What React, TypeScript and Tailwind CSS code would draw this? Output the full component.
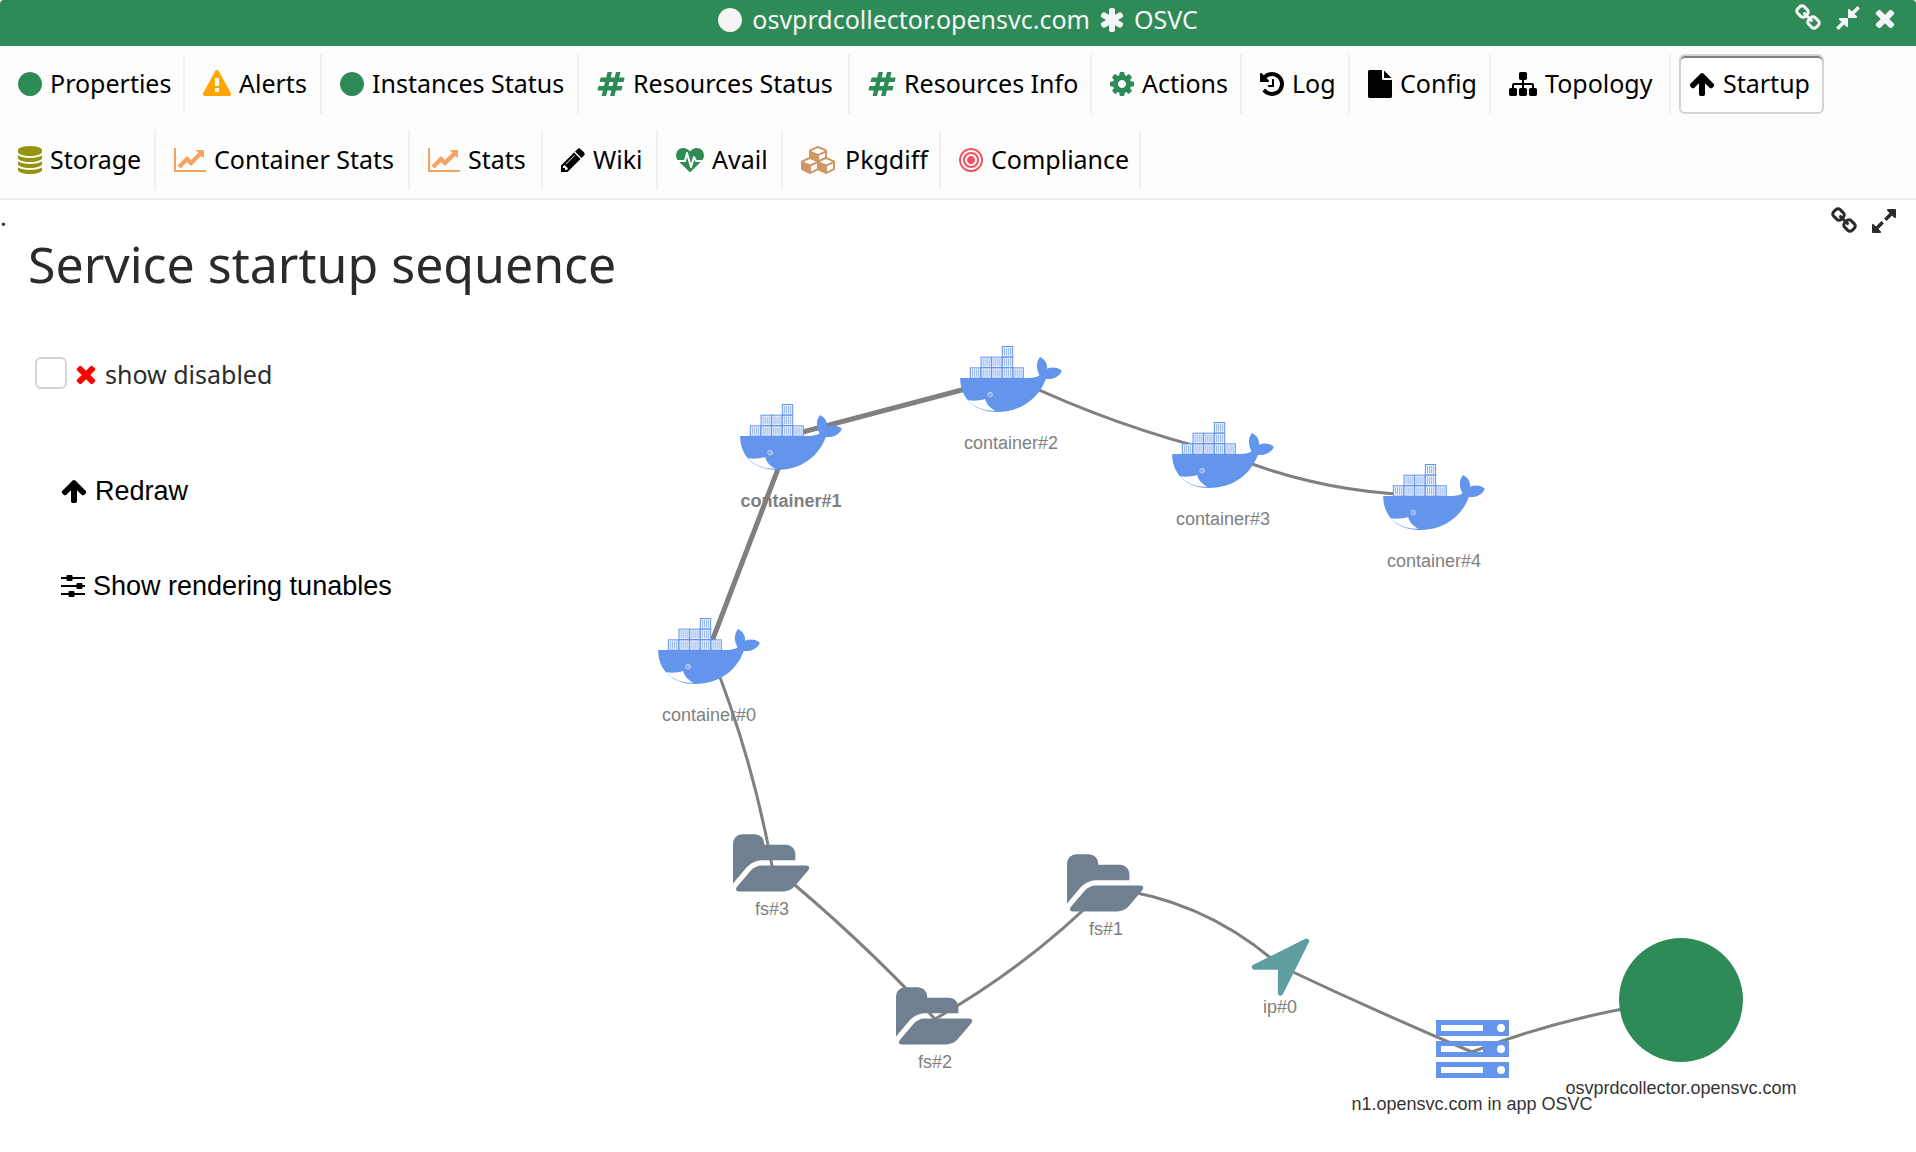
import type { ReactNode } from "react";

type Glyph = { vb: string; d: string };

const glyphs = {
  link: {
    vb: "0 0 1792 1792",
    d: "M1520 1216q0-40-28-68l-208-208q-28-28-68-28-42 0-72 32 3 3 19 18.5t21.5 21.5 15 19 13 25.5 3.5 27.5q0 40-28 68t-68 28q-15 0-27.5-3.5t-25.5-13-19-15-21.5-21.5-18.5-19q-33 31-33 73 0 40 28 68l206 207q27 27 68 27 40 0 68-26l147-146q28-28 28-67zm-703-705q0-40-28-68l-206-207q-28-28-68-28-39 0-68 27l-147 146q-28 28-28 67 0 40 28 68l208 208q27 27 68 27 42 0 72-31-3-3-19-18.5t-21.5-21.5-15-19-13-25.5-3.5-27.5q0-40 28-68t68-28q15 0 27.5 3.5t25.5 13 19 15 21.5 21.5 18.5 19q33-31 33-73zm895 705q0 120-85 203l-147 146q-83 83-203 83-121 0-204-85l-206-207q-83-83-83-203 0-123 88-209l-88-88q-86 88-208 88-120 0-204-84l-208-208q-84-84-84-204t85-203l147-146q83-83 203-83 121 0 204 85l206 207q83 83 83 203 0 123-88 209l88 88q86-88 208-88 120 0 204 84l208 208q84 84 84 204z",
  },
  compress: {
    vb: "0 0 1792 1792",
    d: "M896 960v448q0 26-19 45t-45 19-45-19l-144-144-332 332q-10 10-23 10t-23-10l-114-114q-10-10-10-23t10-23l332-332-144-144q-19-19-19-45t19-45 45-19h448q26 0 45 19t19 45zm755-672q0 13-10 23l-332 332 144 144q19 19 19 45t-19 45-45 19h-448q-26 0-45-19t-19-45v-448q0-26 19-45t45-19 45 19l144 144 332-332q10-10 23-10t23 10l114 114q10 10 10 23z",
  },
  expand: {
    vb: "0 0 1792 1792",
    d: "M883 1056q0 13-10 23l-332 332 144 144q19 19 19 45t-19 45-45 19h-448q-26 0-45-19t-19-45v-448q0-26 19-45t45-19 45 19l144 144 332-332q10-10 23-10t23 10l114 114q10 10 10 23zm781-864v448q0 26-19 45t-45 19-45-19l-144-144-332 332q-10 10-23 10t-23-10l-114-114q-10-10-10-23t10-23l332-332-144-144q-19-19-19-45t19-45 45-19h448q26 0 45 19t19 45z",
  },
  times: {
    vb: "192 0 1408 1792",
    d: "M1490 1322q0 40-28 68l-136 136q-28 28-68 28t-68-28l-294-294-294 294q-28 28-68 28t-68-28l-136-136q-28-28-28-68t28-68l294-294-294-294q-28-28-28-68t28-68l136-136q28-28 68-28t68 28l294 294 294-294q28-28 68-28t68 28l136 136q28 28 28 68t-28 68l-294 294 294 294q28 28 28 68z",
  },
  circle: {
    vb: "128 0 1536 1792",
    d: "M1664 896q0 209-103 385.5t-279.5 279.5-385.5 103-385.5-103-279.5-279.5-103-385.5 103-385.5 279.5-279.5 385.5-103 385.5 103 279.5 279.5 103 385.5z",
  },
  warning: {
    vb: "0 0 1792 1792",
    d: "M1024 1375v-190q0-14-9.5-23.5t-22.5-9.5h-192q-13 0-22.5 9.5t-9.5 23.5v190q0 14 9.5 23.5t22.5 9.5h192q13 0 22.5-9.5t9.5-23.5zm-2-374l18-459q0-12-10-19-13-11-24-11h-220q-11 0-24 11-10 7-10 21l17 457q0 10 10 16.5t24 6.5h185q14 0 23.5-6.5t10.5-16.5zm-14-934l768 1408q35 63-2 126-17 29-46.5 46t-63.5 17h-1536q-34 0-63.5-17t-46.5-46q-37-63-2-126l768-1408q17-31 47-49t65-18 65 18 47 49z",
  },
  hashtag: {
    vb: "0 0 1792 1792",
    d: "M991 1024l64-256h-254l-64 256h254zm768-504l-56 224q-7 24-31 24h-327l-64 256h311q15 0 25 12 10 14 6 28l-56 224q-5 24-31 24h-327l-81 328q-7 24-31 24h-224q-16 0-26-12-9-12-6-28l78-312h-254l-81 328q-7 24-31 24h-225q-15 0-25-12-9-12-6-28l78-312h-311q-15 0-25-12-9-12-6-28l56-224q7-24 31-24h327l64-256h-311q-15 0-25-12-10-14-6-28l56-224q5-24 31-24h327l81-328q7-24 32-24h224q15 0 25 12 9 12 6 28l-78 312h254l81-328q7-24 32-24h224q15 0 25 12 9 12 6 28l-78 312h311q15 0 25 12 9 12 6 28z",
  },
  cog: {
    vb: "128 0 1536 1792",
    d: "M1152 896q0-106-75-181t-181-75-181 75-75 181 75 181 181 75 181-75 75-181zm512-109v222q0 12-8 23t-20 13l-185 28q-19 54-39 91 35 50 107 138 10 12 10 25t-9 23q-27 37-99 108t-94 71q-12 0-26-9l-138-108q-44 23-91 38-16 136-29 186-7 28-36 28h-222q-14 0-24.5-8.5t-11.5-21.5l-28-184q-49-16-90-37l-141 107q-10 9-25 9-14 0-25-11-126-114-165-168-7-10-7-23 0-12 8-23 15-21 51-66.5t54-70.5q-27-50-41-99l-183-27q-13-2-21-12.5t-8-23.5v-222q0-12 8-23t19-13l186-28q14-46 39-92-40-57-107-138-10-12-10-24 0-10 9-23 26-36 98.5-107.5t94.5-71.5q13 0 26 10l138 107q44-23 91-38 16-136 29-186 7-28 36-28h222q14 0 24.5 8.5t11.5 21.5l28 184q49 16 90 37l142-107q9-9 24-9 13 0 25 10 129 119 165 170 7 8 7 22 0 12-8 23-15 21-51 66.5t-54 70.5q26 50 41 98l183 28q13 2 21 12.5t8 23.5z",
  },
  history: {
    vb: "128 0 1536 1792",
    d: "M1664 896q0 156-61 298t-164 245-245 164-298 61q-172 0-327-72.5t-264-204.5q-7-10-6.5-22.5t8.5-20.5l137-138q10-9 25-9 16 2 23 12 73 95 179 147t225 52q104 0 198.5-40.5t163.5-109.5 109.5-163.5 40.5-198.5-40.5-198.5-109.5-163.5-163.5-109.5-198.5-40.5q-98 0-188 35.5t-160 101.5l137 138q31 30 14 69-17 40-59 40h-448q-26 0-45-19t-19-45v-448q0-42 40-59 39-17 69 14l130 129q107-101 244.5-156.5t284.5-55.5q156 0 298 61t245 164 164 245 61 298zm-640-288v448q0 14-9 23t-23 9h-320q-14 0-23-9t-9-23v-64q0-14 9-23t23-9h224v-352q0-14 9-23t23-9h64q14 0 23 9t9 23z",
  },
  file: {
    vb: "128 0 1536 1792",
    d: "M1152 512v-472q22 14 36 28l408 408q14 14 28 36h-472zm-128 32q0 40 28 68t68 28h544v1056q0 40-28 68t-68 28h-1344q-40 0-68-28t-28-68v-1600q0-40 28-68t68-28h800v544z",
  },
  sitemap: {
    vb: "0 0 1792 1792",
    d: "M1792 1248v320q0 40-28 68t-68 28h-320q-40 0-68-28t-28-68v-320q0-40 28-68t68-28h96v-192h-512v192h96q40 0 68 28t28 68v320q0 40-28 68t-68 28h-320q-40 0-68-28t-28-68v-320q0-40 28-68t68-28h96v-192h-512v192h96q40 0 68 28t28 68v320q0 40-28 68t-68 28h-320q-40 0-68-28t-28-68v-320q0-40 28-68t68-28h96v-192q0-52 38-90t90-38h512v-192h-96q-40 0-68-28t-28-68v-320q0-40 28-68t68-28h320q40 0 68 28t28 68v320q0 40-28 68t-68 28h-96v192h512q52 0 90 38t38 90v192h96q40 0 68 28t28 68z",
  },
  arrowUp: {
    vb: "64 0 1664 1792",
    d: "M1675 971q0 51-37 90l-75 75q-38 38-91 38-54 0-90-38l-294-293v704q0 52-37.5 84.5t-90.5 32.5h-128q-53 0-90.5-32.5t-37.5-84.5v-704l-294 293q-36 38-90 38t-90-38l-75-75q-38-38-38-90 0-53 38-91l651-651q35-37 90-37 54 0 91 37l651 651q37 39 37 91z",
  },
  database: {
    vb: "128 0 1536 1792",
    d: "M896 768q237 0 443-43t325-127v170q0 69-103 128t-280 93.5-385 34.5-385-34.5-280-93.5-103-128v-170q119 84 325 127t443 43zm0 768q237 0 443-43t325-127v170q0 69-103 128t-280 93.5-385 34.5-385-34.5-280-93.5-103-128v-170q119 84 325 127t443 43zm0-384q237 0 443-43t325-127v170q0 69-103 128t-280 93.5-385 34.5-385-34.5-280-93.5-103-128v-170q119 84 325 127t443 43zm0-1152q208 0 385 34.5t280 93.5 103 128v128q0 69-103 128t-280 93.5-385 34.5-385-34.5-280-93.5-103-128v-128q0-69 103-128t280-93.5 385-34.5z",
  },
  lineChart: {
    vb: "0 0 2048 1792",
    d: "M2048 1536v128h-2048v-1536h128v1408h1920zm-128-1248v435q0 21-19.5 29.5t-35.5-7.5l-121-121-633 633q-10 10-23 10t-23-10l-233-233-416 416-192-192 585-585q10-10 23-10t23 10l233 233 464-464-121-121q-16-16-7.5-35.5t29.5-19.5h435q14 0 23 9t9 23z",
  },
  pencil: {
    vb: "128 0 1536 1792",
    d: "M491 1536l91-91-235-235-91 91v107h128v128h107zm523-928q0-22-22-22-10 0-17 7l-542 542q-7 7-7 17 0 22 22 22 10 0 17-7l542-542q7-7 7-17zm-54-192l416 416-832 832h-416v-416zm683 96q0 53-37 90l-166 166-416-416 166-165q36-38 90-38 53 0 91 38l235 234q37 39 37 91z",
  },
  heartbeat: {
    vb: "0 0 1792 1792",
    d: "M1280 1024h305q-5 6-10 10.5t-9 7.5l-3 4-623 600q-18 18-44 18t-44-18l-624-602q-5-2-21-20h369q22 0 39.5-13.5t22.5-34.5l70-281 190 667q6 20 23 33t39 13q21 0 38-13t23-33l146-485 56 112q18 35 57 35zm512-428q0 145-103 300h-369l-111-221q-8-17-25.5-27t-36.5-8q-45 5-56 46l-129 430-196-686q-6-20-23.5-33t-39.5-13-39 13.5-22 34.5l-116 464h-423q-103-155-103-300 0-220 127-344t351-124q62 0 126.5 21.5t120 58 95.5 68.5 76 68q36-36 76-68t95.5-68.5 120-58 126.5-21.5q224 0 351 124t127 344z",
  },
  cubes: {
    vb: "0 0 2304 1792",
    d: "M640 1632l384-192v-314l-384 164v342zm-64-454l404-173-404-173-404 173zm1088 454l384-192v-314l-384 164v342zm-64-454l404-173-404-173-404 173zm-448-293l384-165v-266l-384 164v267zm-64-379l441-189-441-189-441 189zm1088 518v416q0 36-19 67t-52 47l-448 224q-25 14-57 14t-57-14l-448-224q-4-2-7-4-2 2-7 4l-448 224q-25 14-57 14t-57-14l-448-224q-33-16-52-47t-19-67v-416q0-38 21.5-70t56.5-48l434-186v-400q0-38 21.5-70t56.5-48l448-192q23-10 50-10t50 10l448 192q35 16 56.5 48t21.5 70v400l434 186q36 16 57 48t21 70z",
  },
  bullseye: {
    vb: "128 0 1536 1792",
    d: "M1152 896q0 106-75 181t-181 75-181-75-75-181 75-181 181-75 181 75 75 181zm128 0q0-159-112.5-271.5t-271.5-112.5-271.5 112.5-112.5 271.5 112.5 271.5 271.5 112.5 271.5-112.5 112.5-271.5zm128 0q0 212-150 362t-362 150-362-150-150-362 150-362 362-150 362 150 150 362zm128 0q0-130-51-248.5t-136.5-204-204-136.5-248.5-51-248.5 51-204 136.5-136.5 204-51 248.5 51 248.5 136.5 204 204 136.5 248.5 51 248.5-51 204-136.5 136.5-204 51-248.5zm128 0q0 209-103 385.5t-279.5 279.5-385.5 103-385.5-103-279.5-279.5-103-385.5 103-385.5 279.5-279.5 385.5-103 385.5 103 279.5 279.5 103 385.5z",
  },
  asterisk: {
    vb: "128 0 1536 1792",
    d: "M1546 1050q46 26 59.5 77.5t-12.5 97.5l-64 110q-26 46-77.5 59.5t-97.5-12.5l-266-153v307q0 52-38 90t-90 38h-128q-52 0-90-38t-38-90v-307l-266 153q-46 26-97.5 12.5t-77.5-59.5l-64-110q-26-46-12.5-97.5t59.5-77.5l266-154-266-154q-46-26-59.5-77.5t12.5-97.5l64-110q26-46 77.5-59.5t97.5 12.5l266 153v-307q0-52 38-90t90-38h128q52 0 90 38t38 90v307l266-153q46-26 97.5-12.5t77.5 59.5l64 110q26 46 12.5 97.5t-59.5 77.5l-266 154z",
  },
  sliders: {
    vb: "128 0 1536 1792",
    d: "M128 320H480V448H128zM544 192H800q64 0 64 64V512q0 64-64 64H544q-64 0-64-64V256q0-64 64-64zM864 320H1664V448H864zM128 832H1120V960H128zM1184 704H1440q64 0 64 64V1024q0 64-64 64H1184q-64 0-64-64V768q0-64 64-64zM1504 832H1664V960H1504zM128 1344H608V1472H128zM672 1216H928q64 0 64 64V1536q0 64-64 64H672q-64 0-64-64V1280q0-64 64-64zM992 1344H1664V1472H992z",
  },
} satisfies Record<string, Glyph>;

type GlyphName = keyof typeof glyphs;

function Icon({ name, className = "" }: { name: GlyphName; className?: string }) {
  const g = glyphs[name];
  return (
    <svg viewBox={g.vb} aria-hidden="true" className={`h-7 w-auto shrink-0 fill-current ${className}`}>
      <path d={g.d} />
    </svg>
  );
}

type Tab = { label: string; icon: GlyphName; color: string; width: string };

const tabs: Tab[] = [
  { label: "Properties", icon: "circle", color: "text-[#2e8b57]", width: "w-[177px]" },
  { label: "Alerts", icon: "warning", color: "text-[#ffa500]", width: "w-[129px]" },
  { label: "Instances Status", icon: "circle", color: "text-[#2e8b57]", width: "w-[249px]" },
  { label: "Resources Status", icon: "hashtag", color: "text-[#2e8b57]", width: "w-[263px]" },
  { label: "Resources Info", icon: "hashtag", color: "text-[#2e8b57]", width: "w-[234px]" },
  { label: "Actions", icon: "cog", color: "text-[#2e8b57]", width: "w-[142px]" },
  { label: "Log", icon: "history", color: "text-black", width: "w-[100px]" },
  { label: "Config", icon: "file", color: "text-black", width: "w-[133px]" },
  { label: "Topology", icon: "sitemap", color: "text-black", width: "w-[172px]" },
  { label: "Startup", icon: "arrowUp", color: "text-black", width: "w-[145px]" },
  { label: "Storage", icon: "database", color: "text-[#949410]", width: "w-[148px]" },
  { label: "Container Stats", icon: "lineChart", color: "text-[#f4a460]", width: "w-[246px]" },
  { label: "Stats", icon: "lineChart", color: "text-[#f4a460]", width: "w-[125px]" },
  { label: "Wiki", icon: "pencil", color: "text-black", width: "w-[107px]" },
  { label: "Avail", icon: "heartbeat", color: "text-[#2e8b57]", width: "w-[117px]" },
  { label: "Pkgdiff", icon: "cubes", color: "text-[#cd9662]", width: "w-[150px]" },
  { label: "Compliance", icon: "bullseye", color: "text-[#f2505d]", width: "w-[192px]" },
];

const activeTab = "Startup";

function TabBar() {
  return (
    <nav className="flex flex-wrap gap-x-2 gap-y-4 border-b-2 border-[#eeeeee] bg-[#fdfdfd] p-2">
      {tabs.map((t) => (
        <button
          key={t.label}
          type="button"
          aria-pressed={t.label === activeTab}
          className={
            t.label === activeTab
              ? `flex h-[60px] items-center gap-2 rounded-md border-2 border-[#d3d3d3] bg-white pl-2 text-[25px] whitespace-nowrap text-black inset-shadow-[0_2px_0_#808080] ${t.width}`
              : `flex h-[60px] items-center gap-2 border-r-2 border-[#f1f1f1] pl-2.5 text-[25px] whitespace-nowrap text-black ${t.width}`
          }
        >
          <Icon name={t.icon} className={t.color} />
          <span>{t.label}</span>
        </button>
      ))}
    </nav>
  );
}

type NodeProps = { x: number; y: number; label: string; bold?: boolean };

function Label({ x, y, children, bold, dark }: { x: number; y: number; children: ReactNode; bold?: boolean; dark?: boolean }) {
  return (
    <text
      x={x}
      y={y}
      textAnchor="middle"
      className={`text-[18px] ${bold ? "font-bold" : ""} ${dark ? "fill-[#343434]" : "fill-[#808080]"}`}
    >
      {children}
    </text>
  );
}

const crates = [
  [29, 64], [61, 64], [93, 64], [125, 64], [157, 64],
  [61, 32], [93, 32], [125, 32],
  [125, 0],
];

/* Whale carrying crates; x, y is the centre of the node. */
function ContainerNode({ x, y, label, bold }: NodeProps) {
  return (
    <g>
      <svg x={x - 51} y={y - 31} width="102" height="66" viewBox="0 0 305 198">
        {crates.map(([cx, cy]) => (
          <g key={`${cx}-${cy}`}>
            <rect x={cx} y={cy} width="34" height="34" fill="#6495ed" />
            <rect x={cx + 3} y={cy + 3} width="28" height="28" fill="#e6eefc" />
            <path d={`M${cx + 8} ${cy + 6}v22m6-22v22m6-22v22m6-22v22`} stroke="#8fb2f1" strokeWidth="2.5" />
          </g>
        ))}
        <path
          d="M0 96H205C219 96 232 94 238 88C226 66 229 44 240 33C253 40 262 52 261 68C276 61 294 65 305 74C299 92 277 101 257 99C236 157 182 198 112 198C44 198 0 158 0 96Z"
          fill="#6495ed"
        />
        <path d="M23 163C42 165 60 164 75 159C79 175 90 187 106 194C71 196 42 183 23 163Z" fill="#fff" />
        <circle cx="90" cy="146" r="7" fill="none" stroke="#d6e3fb" strokeWidth="2.5" />
        <path d="M90 142v5h5" fill="none" stroke="#d6e3fb" strokeWidth="2.5" />
      </svg>
      <Label x={x} y={y + 72} bold={bold}>{label}</Label>
    </g>
  );
}

function FolderNode({ x, y, label }: NodeProps) {
  return (
    <g>
      <svg x={x - 39} y={y - 37} width="78" height="73" viewBox="0 0 1920 1792">
        <path
          fill="#708090"
          d="M1879 952q0 31-31 66l-336 396q-43 51-120.5 86.5t-143.5 35.5h-1088q-34 0-60.5-13t-26.5-43q0-31 31-66l336-396q43-51 120.5-86.5t143.5-35.5h1088q34 0 60.5 13t26.5 43zm-343-344v160h-832q-94 0-197 47.5t-164 119.5l-337 396-5 6q0-4-.5-12.5t-.5-12.5v-960q0-92 66-158t158-66h320q92 0 158 66t66 158v32h544q92 0 158 66t66 158z"
        />
      </svg>
      <Label x={x} y={y + 49}>{label}</Label>
    </g>
  );
}

function AddressNode({ x, y, label }: NodeProps) {
  return (
    <g>
      <svg x={x - 36} y={y - 36} width="73" height="73" viewBox="0 0 1792 1792">
        <path
          fill="#5f9ea0"
          d="M1593 349l-640 1280q-17 35-57 35-5 0-15-2-22-5-35.5-22.5t-13.5-39.5v-576h-576q-22 0-39.5-13.5t-22.5-35.5 4-42 29-30l1280-640q13-7 29-7 27 0 45 19 15 14 18.5 34.5t-6.5 39.5z"
        />
      </svg>
      <Label x={x} y={y + 49}>{label}</Label>
    </g>
  );
}

/* Each rack unit is one path with its slot and lamp cut out. */
function ServerNode({ x, y, label }: NodeProps) {
  return (
    <g>
      <svg x={x - 36} y={y - 32} width="73" height="58" viewBox="0 0 73 58">
        {[0, 21, 42].map((top) => (
          <path
            key={top}
            fill="#6495ed"
            fillRule="evenodd"
            d={`M0 ${top}h73v16h-73zM5 ${top + 5}v6h42v-6zM61 ${top + 8}a4 4 0 1 0 8 0a4 4 0 1 0-8 0z`}
          />
        ))}
      </svg>
      <Label x={x} y={y + 58} dark>{label}</Label>
    </g>
  );
}

function Graph() {
  return (
    <svg viewBox="640 236 1276 914" role="img" aria-label="Service startup graph" className="block w-full font-['Liberation_Sans',Arial,sans-serif]">
      <g fill="none" stroke="#808080" strokeWidth="3">
        <path d="M1681 1000Q1573 1013 1472 1052" />
        <path d="M1472 1052Q1375 1011 1280 966" />
        <path d="M1280 966Q1205 899 1106 888" />
        <path d="M1106 888Q1030 965 935 1019" />
        <path d="M935 1019Q859 937 772 866" />
        <path d="M772 866Q752 755 709 649" />
        <path d="M709 649L791 435L1011 377" strokeWidth="5" />
        <path d="M1011 377Q1115 427 1223 453" />
        <path d="M1223 453Q1327 496 1435 495" />
      </g>
      <circle cx="1681" cy="1000" r="62" fill="#2e8b57" />
      <Label x={1681} y={1094} dark>osvprdcollector.opensvc.com</Label>
      <ServerNode x={1472} y={1052} label="n1.opensvc.com in app OSVC" />
      <AddressNode x={1280} y={964} label="ip#0" />
      <FolderNode x={1106} y={886} label="fs#1" />
      <FolderNode x={935} y={1019} label="fs#2" />
      <FolderNode x={772} y={866} label="fs#3" />
      <ContainerNode x={709} y={649} label="container#0" />
      <ContainerNode x={791} y={435} label="container#1" bold />
      <ContainerNode x={1011} y={377} label="container#2" />
      <ContainerNode x={1223} y={453} label="container#3" />
      <ContainerNode x={1434} y={495} label="container#4" />
    </svg>
  );
}

export default function App() {
  return (
    <div className="min-h-screen bg-white font-['Noto_Sans',sans-serif] text-[#2a2c2c]">
      <header className="grid h-[46px] grid-cols-[1fr_auto_1fr] items-start rounded-t-sm bg-[#2e8b57] text-[#f5f5f5]">
        <span />
        <h2 className="flex h-10 items-center gap-2.5 text-[25px] whitespace-nowrap">
          <Icon name="circle" />
          <span>osvprdcollector.opensvc.com</span>
          <Icon name="asterisk" />
          <span>OSVC</span>
        </h2>
        <div className="flex h-9 items-center justify-end gap-3 pr-5">
          <button type="button" aria-label="Copy link"><Icon name="link" /></button>
          <button type="button" aria-label="Shrink"><Icon name="compress" /></button>
          <button type="button" aria-label="Close"><Icon name="times" /></button>
        </div>
      </header>

      <TabBar />

      <main>
        <div className="flex h-[34px] items-start justify-between pr-[18px]">
          <span className="text-[25px] leading-8">.</span>
          <div className="flex gap-3 pt-[7px]">
            <button type="button" aria-label="Copy link to this view"><Icon name="link" /></button>
            <button type="button" aria-label="Expand view"><Icon name="expand" /></button>
          </div>
        </div>
        <div className="flex items-start">
          <section className="w-[640px] shrink-0 pl-7">
            <h1 className="text-[50px] leading-[60px] whitespace-nowrap">Service startup sequence</h1>
            <div className="flex items-center gap-2 pt-[62px] pl-[7px]">
              <input id="show-disabled" type="checkbox" className="size-8 appearance-none rounded-md border-2 border-[#d3d3d3] bg-white" />
              <label htmlFor="show-disabled" className="flex items-center gap-2 pt-0.5 text-[25px] leading-8">
                <Icon name="times" className="text-[#ff0000]" />
                show disabled
              </label>
            </div>
            <div className="flex flex-col items-start gap-[63px] pt-[85px] pl-[33px] font-['Liberation_Sans',Arial,sans-serif] text-[27px] leading-8 text-black">
              <button type="button" className="flex items-center gap-2">
                <Icon name="arrowUp" />
                Redraw
              </button>
              <button type="button" className="flex items-center gap-2">
                <Icon name="sliders" />
                Show rendering tunables
              </button>
            </div>
          </section>
          <div className="min-w-0 flex-1 pt-0.5">
            <Graph />
          </div>
        </div>
      </main>
    </div>
  );
}
